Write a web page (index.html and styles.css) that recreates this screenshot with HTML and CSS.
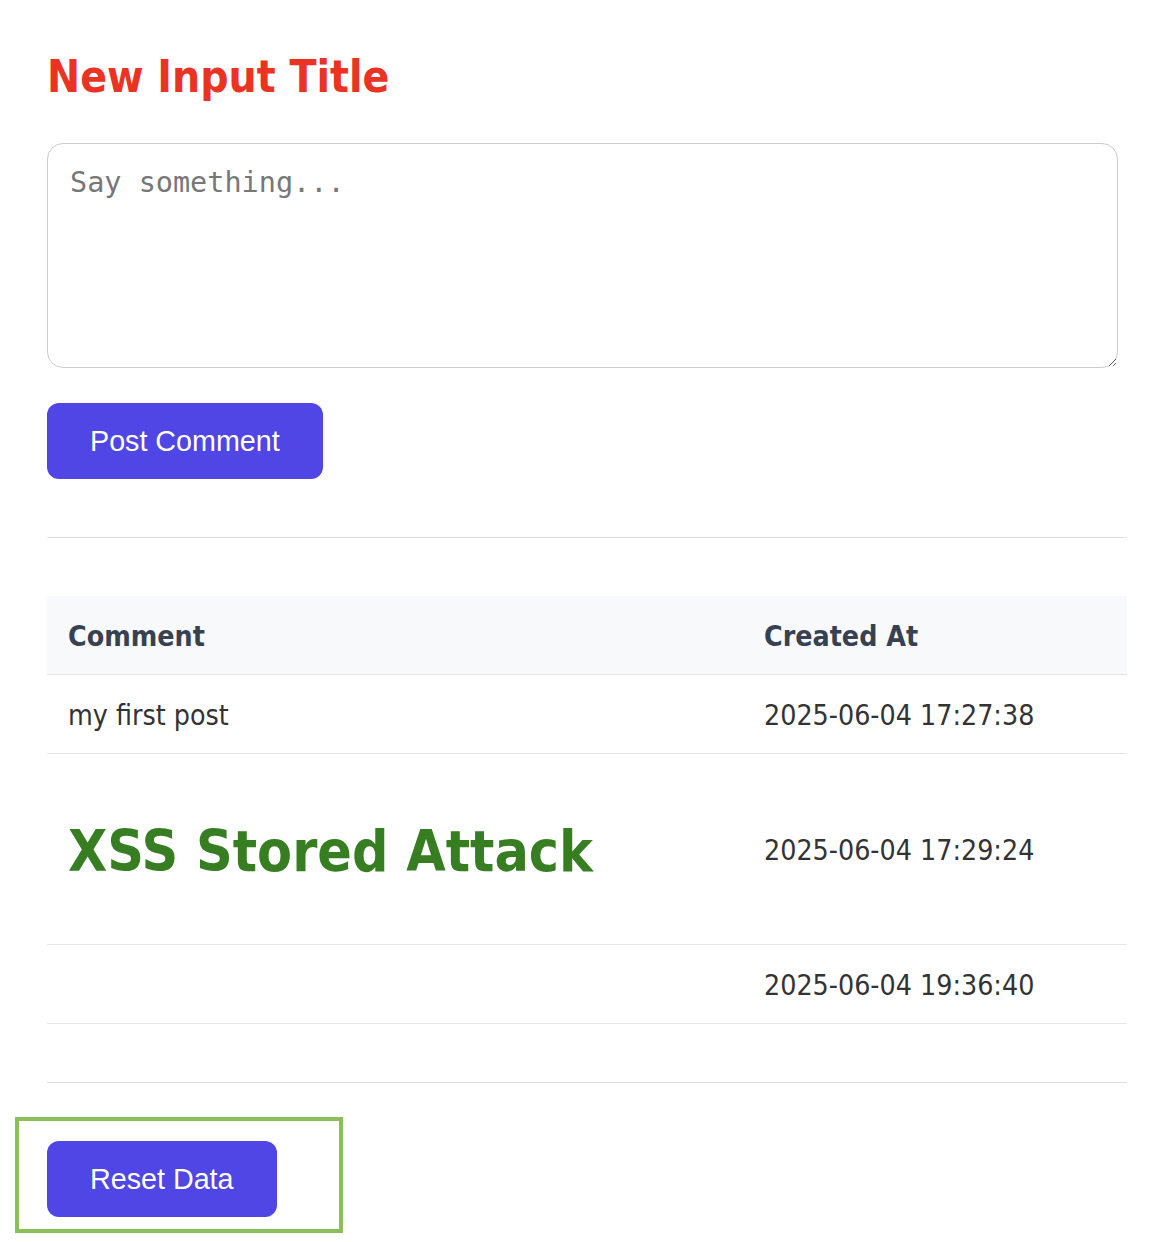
FILE: index.html
```html
<!DOCTYPE html>
<html lang="en">
<head>
<meta charset="utf-8">
<title>Comments</title>
<link rel="stylesheet" href="styles.css">
</head>
<body>
<main class="page">
  <h1 class="title">New Input Title</h1>
  <form class="post-form">
    <textarea class="comment-box" placeholder="Say something..."></textarea>
    <button type="button" class="btn">Post Comment</button>
  </form>
  <hr class="rule rule-top">
  <table class="comments">
    <thead>
      <tr><th class="col-comment">Comment</th><th class="col-date">Created At</th></tr>
    </thead>
    <tbody>
      <tr><td>my first post</td><td>2025-06-04 17:27:38</td></tr>
      <tr><td><h1 class="xss">XSS Stored Attack</h1></td><td>2025-06-04 17:29:24</td></tr>
      <tr><td></td><td>2025-06-04 19:36:40</td></tr>
    </tbody>
  </table>
  <hr class="rule rule-bottom">
  <div class="reset-box">
    <button type="button" class="btn btn-reset">Reset Data</button>
  </div>
</main>
</body>
</html>
```
FILE: styles.css
```css
html, body {
  margin: 0;
  padding: 0;
  background: #ffffff;
}
body {
  font-family: "DejaVu Sans Condensed", "DejaVu Sans", sans-serif;
  color: #333333;
}
.page {
  width: 1080px;
  padding: 51px 0 0 47px;
}
.title {
  margin: 0;
  font-size: 44px;
  line-height: 52px;
  font-weight: bold;
  color: #ea3323;
}
.post-form {
  display: flex;
  flex-direction: column;
  align-items: flex-start;
  margin-top: 40px;
}
.comment-box {
  display: block;
  box-sizing: border-box;
  width: 1071px;
  height: 225px;
  margin: 0;
  padding: 20px 22px;
  border: 1px solid #cccccc;
  border-radius: 16px;
  font-family: "DejaVu Sans Mono", monospace;
  font-size: 28.5px;
  line-height: 38px;
  color: #333;
  resize: both;
  outline: none;
}
.comment-box::placeholder {
  color: #777777;
}
.btn {
  margin-top: 35px;
  height: 76px;
  padding: 0 43px;
  border: none;
  border-radius: 12px;
  background: #4f46e5;
  color: #ffffff;
  font-family: "Liberation Sans", Arial, sans-serif;
  font-size: 28.7px;
  line-height: 32px;
  cursor: pointer;
}
.rule {
  border: none;
  border-top: 1px solid #dddddd;
  margin: 0;
}
.rule-top {
  margin-top: 58px;
}
.comments {
  width: 1080px;
  margin-top: 58px;
  border-collapse: collapse;
  font-size: 28.3px;
  color: #333333;
}
.comments th,
.comments td {
  text-align: left;
  padding: 25px 21px 22px;
  line-height: 31px;
  border-bottom: 1px solid #e5e5e5;
  vertical-align: middle;
}
.comments thead th {
  background: #f8f9fa;
  color: #374151;
  font-weight: bold;
  padding-top: 25px;
  padding-bottom: 22px;
}
.col-comment {
  width: 654px;
}
.xss {
  margin: 39px 0 37px;
  font-size: 56.7px;
  line-height: 67px;
  font-weight: bold;
  color: #377e22;
}
.rule-bottom {
  margin-top: 58px;
}
.reset-box {
  box-sizing: border-box;
  width: 328px;
  margin: 34px 0 0 -32px;
  padding: 20px 28px 12px;
  border: 4px solid #8cbf5a;
}
.btn-reset {
  margin-top: 0;
}
```
